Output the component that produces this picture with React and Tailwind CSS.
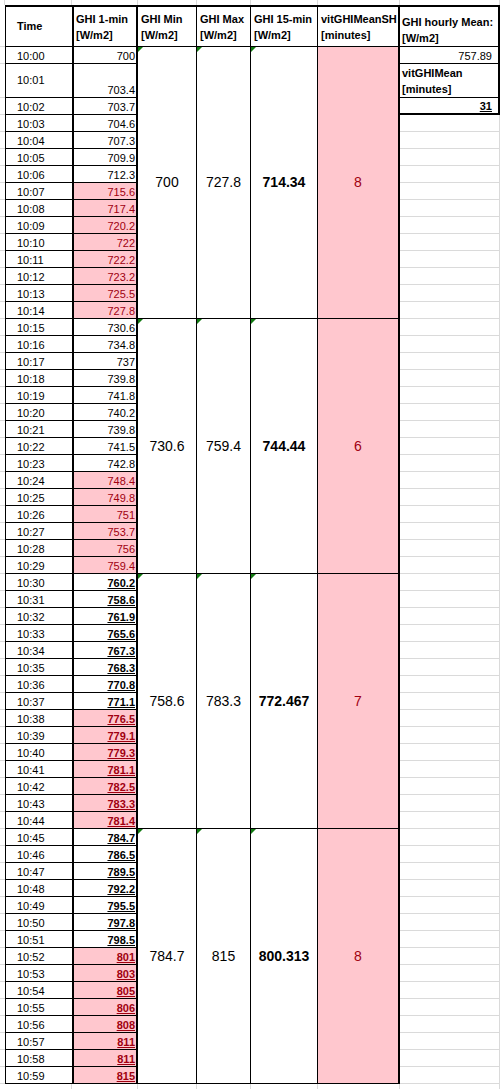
import React from "react";

const DATA = [
  ["10:00", "700"], ["10:01", "703.4"], ["10:02", "703.7"], ["10:03", "704.6"], ["10:04", "707.3"],
  ["10:05", "709.9"], ["10:06", "712.3"], ["10:07", "715.6"], ["10:08", "717.4"], ["10:09", "720.2"],
  ["10:10", "722"], ["10:11", "722.2"], ["10:12", "723.2"], ["10:13", "725.5"], ["10:14", "727.8"],
  ["10:15", "730.6"], ["10:16", "734.8"], ["10:17", "737"], ["10:18", "739.8"], ["10:19", "741.8"],
  ["10:20", "740.2"], ["10:21", "739.8"], ["10:22", "741.5"], ["10:23", "742.8"], ["10:24", "748.4"],
  ["10:25", "749.8"], ["10:26", "751"], ["10:27", "753.7"], ["10:28", "756"], ["10:29", "759.4"],
  ["10:30", "760.2"], ["10:31", "758.6"], ["10:32", "761.9"], ["10:33", "765.6"], ["10:34", "767.3"],
  ["10:35", "768.3"], ["10:36", "770.8"], ["10:37", "771.1"], ["10:38", "776.5"], ["10:39", "779.1"],
  ["10:40", "779.3"], ["10:41", "781.1"], ["10:42", "782.5"], ["10:43", "783.3"], ["10:44", "781.4"],
  ["10:45", "784.7"], ["10:46", "786.5"], ["10:47", "789.5"], ["10:48", "792.2"], ["10:49", "795.5"],
  ["10:50", "797.8"], ["10:51", "798.5"], ["10:52", "801"], ["10:53", "803"], ["10:54", "805"],
  ["10:55", "806"], ["10:56", "808"], ["10:57", "811"], ["10:58", "811"], ["10:59", "815"],
];

const BLOCKS = [
  ["700", "727.8", "714.34", "8"],
  ["730.6", "759.4", "744.44", "6"],
  ["758.6", "783.3", "772.467", "7"],
  ["784.7", "815", "800.313", "8"],
];

const isPink = (i) =>
  (i >= 7 && i <= 14) || (i >= 24 && i <= 29) || (i >= 38 && i <= 44) || (i >= 52 && i <= 59);

function Tri() {
  return (
    <div className="absolute left-0 top-0 w-0 h-0 border-t-[5px] border-r-[5px] border-t-[#117a11] border-r-transparent" />
  );
}

export default function App() {
  const cells = [];
  const grid = "border-[#dadada]";

  for (let c = 0; c < 9; c++) {
    cells.push(<div key={"t" + c} className={c < 8 ? "border-r border-[#dadada]" : ""} />);
  }

  cells.push(<div key="h0" className={"border-b " + grid} />);
  cells.push(
    <div key="h1" className="border-t-2 border-l border-b border-black flex items-center pl-[11px] font-bold">
      Time
    </div>
  );
  cells.push(
    <div key="h2" className="border-t-2 border-l-2 border-r-2 border-b border-black flex flex-col justify-center pl-[2px] font-bold leading-[16px]">
      <span>GHI 1-min</span>
      <span>[W/m2]</span>
    </div>
  );
  cells.push(
    <div key="h3" className="border-t-2 border-r border-b border-black flex flex-col justify-center pl-[3px] font-bold leading-[16px]">
      <span>GHI Min</span>
      <span>[W/m2]</span>
    </div>
  );
  cells.push(
    <div key="h4" className="border-t-2 border-r border-b border-black flex flex-col justify-center pl-[3px] font-bold leading-[16px]">
      <span>GHI Max</span>
      <span>[W/m2]</span>
    </div>
  );
  cells.push(
    <div key="h5" className="border-t-2 border-r border-b border-black flex flex-col justify-center pl-[3px] font-bold leading-[16px]">
      <span>GHI 15-min</span>
      <span>[W/m2]</span>
    </div>
  );
  cells.push(
    <div key="h6" className="border-t-2 border-r-2 border-b border-black flex flex-col justify-center pl-[3px] font-bold leading-[16px] whitespace-nowrap">
      <span>vitGHIMeanSH</span>
      <span>[minutes]</span>
    </div>
  );
  cells.push(
    <div key="h7" className="border-t-2 border-r-2 border-b border-black flex flex-col justify-end pl-[2px] font-bold leading-[16px] whitespace-nowrap">
      <span>GHI hourly Mean:</span>
      <span>[W/m2]</span>
    </div>
  );
  cells.push(<div key="h8" />);

  DATA.forEach(([t, v], i) => {
    const pink = isPink(i);
    const bold = i >= 30;
    const tall = i === 1;
    cells.push(<div key={"s" + i} className={"border-b " + grid} />);
    cells.push(
      <div
        key={"a" + i}
        className={
          "border-l border-b border-black flex pl-[11px] leading-[9px] " +
          (tall ? "items-center" : "items-end pb-[2px]")
        }
      >
        {t}
      </div>
    );
    cells.push(
      <div
        key={"b" + i}
        className={
          "border-l-2 border-r-2 border-b border-black flex items-end justify-end pr-px pb-[2px] leading-[9px] " +
          (pink ? "bg-[#ffc7ce] text-[#a00010] " : "") +
          (bold ? "font-bold underline decoration-1 underline-offset-[1px]" : "")
        }
      >
        {v}
      </div>
    );
    if (i % 15 === 0) {
      const [mn, mx, m15, vit] = BLOCKS[i / 15];
      cells.push(
        <div key={"c" + i} className="row-span-15 relative border-r border-b border-black flex items-center justify-center text-[14px]">
          <Tri />
          {mn}
        </div>
      );
      cells.push(
        <div key={"d" + i} className="row-span-15 relative border-r border-b border-black flex items-center justify-center text-[14px]">
          <Tri />
          {mx}
        </div>
      );
      cells.push(
        <div key={"e" + i} className="row-span-15 relative border-r border-b border-black flex items-center justify-center text-[14px] font-bold">
          <Tri />
          {m15}
        </div>
      );
      cells.push(
        <div key={"f" + i} className="row-span-15 border-r-2 border-b border-black bg-[#ffc7ce] text-[#a00010] flex items-center justify-center text-[14px]">
          {vit}
        </div>
      );
    }
    if (i === 0) {
      cells.push(
        <div key={"g" + i} className="col-start-8 border-r-2 border-b border-black flex items-end justify-end pr-[6px] pb-[2px] leading-[9px]">
          757.89
        </div>
      );
    } else if (i === 1) {
      cells.push(
        <div key={"g" + i} className="col-start-8 border-r-2 border-b border-black flex flex-col justify-end pl-[2px] font-bold leading-[16px]">
          <span>vitGHIMean</span>
          <span>[minutes]</span>
        </div>
      );
    } else if (i === 2) {
      cells.push(
        <div key={"g" + i} className="col-start-8 border-r-2 border-b-2 border-black flex items-end justify-end pr-[6px] pb-[2px] leading-[9px] font-bold underline decoration-1 underline-offset-[1px]">
          31
        </div>
      );
    } else {
      cells.push(<div key={"g" + i} className={"col-start-8 border-r border-b " + grid} />);
    }
    cells.push(<div key={"z" + i} className="col-start-9" />);
  });

  for (let c = 0; c < 9; c++) {
    cells.push(
      <div key={"x" + c} className={c === 0 || c === 8 ? "" : "border-r border-[#dadada]"} />
    );
  }

  return (
    <div className="w-[501px] h-[1089px] overflow-hidden bg-white text-black text-[11px] font-['Liberation_Sans',Arial,sans-serif]">
      <div className="grid grid-cols-[5px_67px_66px_59px_54px_67px_82px_100px_1px] grid-rows-[5px_42px_17px_34px_repeat(58,17px)_5px] w-[501px] h-[1089px]">
        {cells}
      </div>
    </div>
  );
}
